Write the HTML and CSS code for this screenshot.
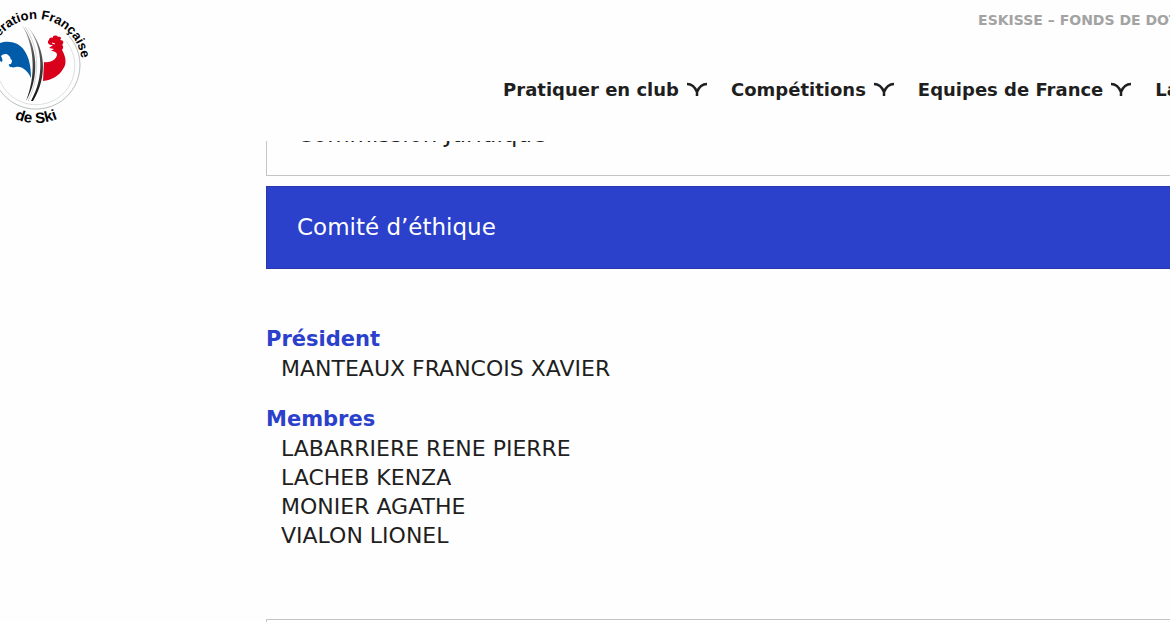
FILE: index.html
```html
<!DOCTYPE html>
<html lang="fr">

<head>
    <meta charset="UTF-8">
    <meta name="viewport" content="width=device-width, initial-scale=1.0">
    <title>Comité d’éthique</title>
    <link rel="stylesheet" href="styles.css">
</head>

<body>
    <header class="header">
        <a class="logo" href="#" aria-label="Fédération Française de Ski">
            <svg width="96" height="130" viewBox="0 0 96 130">
                <defs>
                    <path id="arc-top" d="M-10 65 A46 46 0 0 1 82 65" />
                    <path id="arc-bottom" d="M-22 65 A58 58 0 0 0 94 65" />
                    <linearGradient id="ski" x1="0" y1="0" x2="0" y2="1">
                        <stop offset="0" stop-color="#aaa" />
                        <stop offset=".35" stop-color="#555" />
                        <stop offset="1" stop-color="#111" />
                    </linearGradient>
                </defs>
                <!-- rings -->
                <path d="M69 36 A44 44 0 1 1 -8 66" fill="none" stroke="#b9bfbf" />
                <path d="M66 41 A39 39 0 1 1 0 81" fill="none" stroke="#dde0e0" />
                <!-- blue rooster -->
                <path d="M0 43 C8 40 19 42 24 50 C29 57 31 66 31 78 C27 70 22 66 16 67 C12 68 8 67 9 64 C11 65 12 63 12 60 C10 60 11 57 9 56 C7 53 3 54 1 56 C2 58 3 60 2 62 L0 61 Z" fill="#005ca9" />
                <!-- red rooster -->
                <path d="M51 45 C48 45 47 41 49 40 C49 38 51 37 53 38 C52 35 57 35 58 37 C61 36 62 39 60 40 C64 40 64 43 62 45 C64 46 63 49 62 50 C66 57 67 64 63 69 C59 76 52 80 43 81 L44 62 C50 63 56 60 57 55 C57 52 54 51 51 51 L54 49 L49 48 L53 45 Z" fill="#d9001b" />
                <path d="M52 43 L55 44" stroke="#fff" fill="none" />
                <!-- skis -->
                <path d="M22 25 C35 47 36 76 26 101 C40 77 38 47 22 25 Z M28 27 C44 48 44 78 31 101 L33 101 C48 77 46 48 28 27 Z" fill="url(#ski)" />
                <path d="M25 27 C40 48 40 77 28 101" fill="none" stroke="#aaa" stroke-width=".5" />
                <text class="logo-text" text-anchor="middle">
                    <textPath href="#arc-top" startOffset="50%">Fédération Française</textPath>
                </text>
                <text class="logo-text logo-ski" text-anchor="middle">
                    <textPath href="#arc-bottom" startOffset="50%">de Ski</textPath>
                </text>
            </svg>
        </a>
        <div class="menus">
            <a class="top-link" href="#">ESKISSE – FONDS DE DOTATION</a>
            <nav class="nav">
                <a href="#">Pratiquer en club
                    <svg class="arrow" viewBox="0 0 20 14"><path d="M0 2 C5 2 8 5 10 10 C12 5 15 2 20 2 M10 8 V14" /></svg>
                </a>
                <a href="#">Compétitions
                    <svg class="arrow" viewBox="0 0 20 14"><path d="M0 2 C5 2 8 5 10 10 C12 5 15 2 20 2 M10 8 V14" /></svg>
                </a>
                <a href="#">Equipes de France
                    <svg class="arrow" viewBox="0 0 20 14"><path d="M0 2 C5 2 8 5 10 10 C12 5 15 2 20 2 M10 8 V14" /></svg>
                </a>
                <a href="#">La FFS</a>
            </nav>
        </div>
    </header>

    <main class="content">
        <button class="panel" type="button">Commission Juridique</button>
        <button class="panel active" type="button">Comité d’éthique</button>
        <section class="members">
            <h2>Président</h2>
            <ul>
                <li>MANTEAUX FRANCOIS XAVIER</li>
            </ul>
            <h2>Membres</h2>
            <ul>
                <li>LABARRIERE RENE PIERRE</li>
                <li>LACHEB KENZA</li>
                <li>MONIER AGATHE</li>
                <li>VIALON LIONEL</li>
            </ul>
        </section>
        <button class="panel" type="button"></button>
    </main>
</body>

</html>
```
FILE: styles.css
```css
* {
    box-sizing: border-box;
}

body {
    margin: 0;
    overflow: hidden;
    background-color: #fefefe;
    color: #1f1f1f;
    font-family: "DejaVu Sans", Verdana, sans-serif;
}

a {
    color: inherit;
    text-decoration: none;
}

.header {
    position: fixed;
    top: 0;
    left: 0;
    right: 0;
    height: 141px;
    display: flex;
    justify-content: space-between;
    overflow: hidden;
    background-color: #fefefe;
}

.logo-text {
    font-family: "Liberation Sans", Arial, sans-serif;
    font-size: 13px;
    font-weight: bold;
    fill: #000;
}

.logo-ski {
    font-size: 15px;
}

.menus {
    width: 57%;
    display: flex;
    flex-direction: column;
    gap: 52px;
    padding-top: 10px;
    white-space: nowrap;
}

.top-link {
    margin-left: 475px;
    color: #a3a3a3;
    font-size: 14px;
    font-weight: bold;
    line-height: 20px;
}

.nav {
    display: flex;
    gap: 24px;
    font-size: 18px;
    font-weight: bold;
    line-height: 16px;
}

.nav a {
    display: flex;
    gap: 8px;
}

.arrow {
    flex: none;
    width: 20px;
    height: 14px;
    fill: none;
    stroke: #1f1f1f;
    stroke-width: 2.5;
}

.content {
    margin-left: 266px;
    padding-top: 93px;
}

.panel {
    display: block;
    width: 100%;
    height: 83px;
    margin-bottom: 10px;
    padding: 0 30px 2px;
    border: 1px solid #c4c4c4;
    border-right: 0;
    background-color: #fefefe;
    color: #1f1f1f;
    font-family: inherit;
    font-size: 23px;
    text-align: left;
    cursor: pointer;
}

.panel.active {
    border-color: #2938a8;
    background-color: #2b40cb;
    color: #fefefe;
}

.members {
    padding: 46px 0 47px;
    font-size: 22px;
    line-height: 29px;
}

.members h2 {
    margin: 0;
    color: #2b40cb;
    font-size: 21px;
    font-weight: bold;
}

.members ul {
    margin: 0 0 22px;
    padding-left: 15px;
    list-style: none;
}
```
